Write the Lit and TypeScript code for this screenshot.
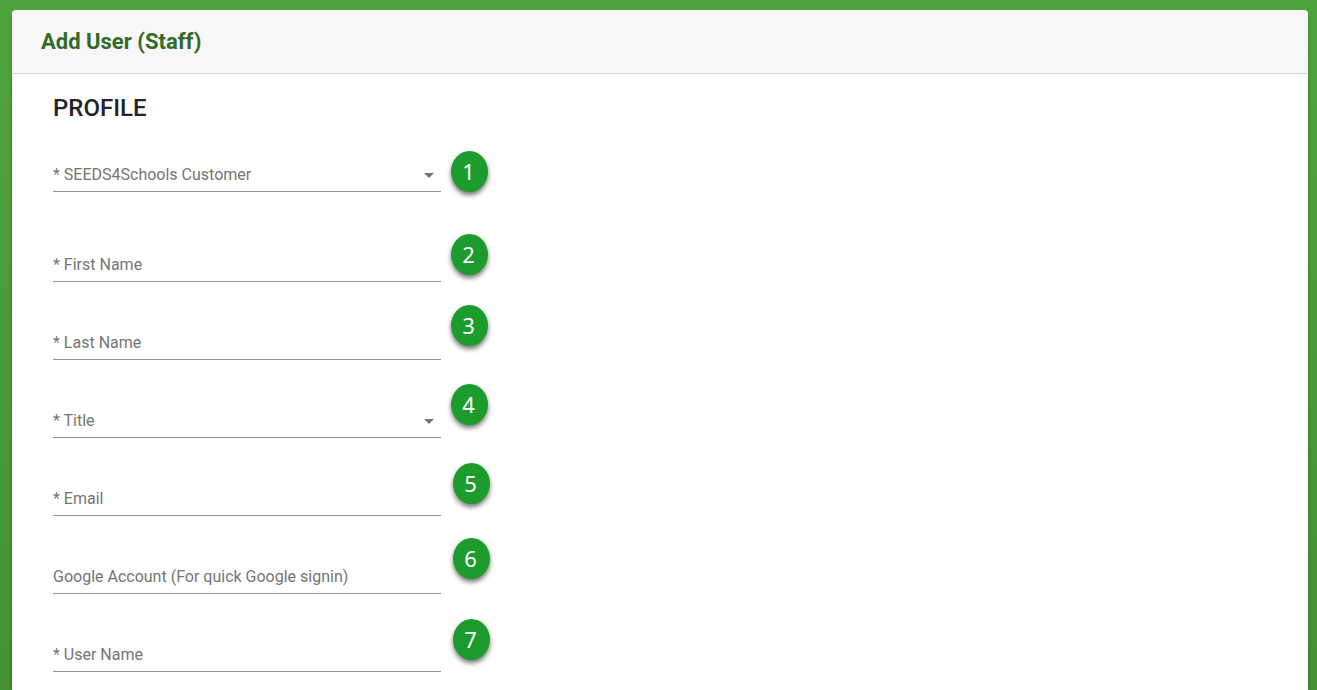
import { LitElement, html, css, nothing } from "lit";
import { customElement, property } from "lit/decorators.js";
import { styleMap } from "lit/directives/style-map.js";

interface Field {
  id: string;
  label: string;
  kind: "text" | "email" | "select";
  required: boolean;
}

interface Marker {
  x: number;
  y: number;
}

const FIELDS: Field[] = [
  { id: "customer", label: "SEEDS4Schools Customer", kind: "select", required: true },
  { id: "first-name", label: "First Name", kind: "text", required: true },
  { id: "last-name", label: "Last Name", kind: "text", required: true },
  { id: "title", label: "Title", kind: "select", required: true },
  { id: "email", label: "Email", kind: "email", required: true },
  { id: "google", label: "Google Account (For quick Google signin)", kind: "text", required: false },
  { id: "user-name", label: "User Name", kind: "text", required: true },
];

// Numbered guide markers: x from the column's right edge, y from its top.
const MARKERS: Marker[] = [
  { x: 10, y: 77 },
  { x: 10, y: 160 },
  { x: 10, y: 231 },
  { x: 10, y: 310 },
  { x: 12, y: 389 },
  { x: 12, y: 464 },
  { x: 12, y: 545 },
];

@customElement("form-field")
export class FormField extends LitElement {
  @property({ attribute: false }) field!: Field;

  static styles = css`
    :host {
      display: block;
    }
    .field {
      display: grid;
      align-items: center;
      height: 32px;
      border-bottom: 1px solid #949494;
    }
    .label,
    .control,
    .arrow {
      grid-area: 1 / 1;
    }
    .label {
      color: #757575;
      font-size: 16px;
      line-height: 20px;
      pointer-events: none;
      z-index: 1;
    }
    .control {
      box-sizing: border-box;
      width: 100%;
      height: 32px;
      margin: 0;
      padding: 0;
      border: 0;
      outline: 0;
      background: transparent;
      appearance: none;
      color: #212529;
      font: inherit;
      font-size: 16px;
    }
    .arrow {
      justify-self: end;
      width: 10px;
      height: 5px;
      margin-right: 7px;
      fill: #757575;
      pointer-events: none;
    }
  `;

  render() {
    const { id, label, kind, required } = this.field;
    return html`
      <div class="field">
        <label class="label" for=${id}>${required ? "* " : nothing}${label}</label>
        ${kind === "select"
          ? html`<select class="control" id=${id} ?required=${required}>
                <option value=""></option>
              </select>
              <svg class="arrow" viewBox="0 0 10 5" aria-hidden="true">
                <path d="M0 0h10L5 5z" />
              </svg>`
          : html`<input class="control" id=${id} type=${kind} ?required=${required} />`}
      </div>
    `;
  }
}

@customElement("app-root")
export class AppRoot extends LitElement {
  static styles = css`
    :host {
      display: flex;
      box-sizing: border-box;
      min-height: 100vh;
      padding: 10px 9px 0 12px;
      background: linear-gradient(#50a43e, #469136);
      font-family: Roboto, sans-serif;
    }
    .card {
      flex: 1;
      border: 1px solid #fff;
      border-bottom: 0;
      border-radius: 4px 4px 0 0;
      background: #fff;
      box-shadow: 0 2px 4px rgba(0, 0, 0, 0.25);
    }
    .header {
      padding: 16px 28px;
      border-bottom: 1px solid #d6d6d6;
      background: #f7f7f7;
    }
    .title {
      margin: 0;
      color: #336a28;
      font-size: 22px;
      font-weight: 700;
      line-height: 30px;
    }
    .body {
      padding: 0 40px;
    }
    .column {
      position: relative;
      width: 32%;
      min-width: 280px;
    }
    .section {
      margin: 0;
      padding: 20px 0 37px;
      color: #212529;
      font-size: 24px;
      font-weight: 500;
      line-height: 28px;
    }
    .fields {
      display: grid;
      gap: 45px;
    }
    .fields form-field:first-child {
      margin-bottom: 12px;
    }
    .marker {
      position: absolute;
      display: grid;
      place-items: center;
      box-sizing: border-box;
      width: 37px;
      height: 41px;
      padding: 0 3px 2px 0;
      border-radius: 50%;
      background: #1c9c2c;
      box-shadow: 0 3px 5px rgba(0, 0, 0, 0.55);
      color: #fff;
      font-family: "Noto Sans", sans-serif;
      font-size: 22px;
      line-height: 30px;
    }
  `;

  render() {
    return html`
      <main class="card">
        <header class="header"><h1 class="title">Add User (Staff)</h1></header>
        <form class="body">
          <div class="column">
            <h2 class="section">PROFILE</h2>
            <div class="fields">
              ${FIELDS.map((f) => html`<form-field .field=${f}></form-field>`)}
            </div>
            ${MARKERS.map(
              (m, i) => html`<span
                class="marker"
                style=${styleMap({ left: `calc(100% + ${m.x}px)`, top: `${m.y}px` })}
                >${i + 1}</span
              >`
            )}
          </div>
        </form>
      </main>
    `;
  }
}
